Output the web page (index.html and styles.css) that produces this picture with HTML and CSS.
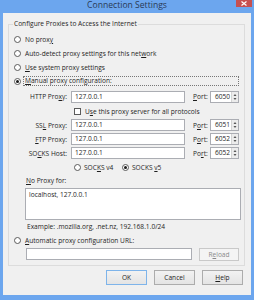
FILE: index.html
```html
<!DOCTYPE html>
<html>
<head>
<meta charset="utf-8">
<link rel="stylesheet" href="styles.css">
</head>
<body>
<div class="window">
  <div class="titlebar">
    <span class="title">Connection Settings</span>
    <span class="close"><svg width="6" height="5" viewBox="0 0 6 5"><path d="M0.5 0.5 L5.5 4.5 M5.5 0.5 L0.5 4.5" stroke="#fff" stroke-width="1.2"/></svg></span>
  </div>
  <div class="client">
    <fieldset class="group">
      <legend>Configure Proxies to Access the Internet</legend>
      <div class="rows">
        <div class="opt"><span class="radio"></span><span>No prox<u>y</u></span></div>
        <div class="opt"><span class="radio"></span><span>Auto-detect proxy settings for this net<u>w</u>ork</span></div>
        <div class="opt"><span class="radio"></span><span><u>U</u>se system proxy settings</span></div>
        <div class="opt"><span class="radio on"></span><span class="focus"><u>M</u>anual proxy configuration:</span></div>
        <div class="prow first"><span class="plabel">HTTP Pro<u>x</u>y:</span><span class="field">127.0.0.1</span><span class="portlbl"><u>P</u>ort:</span><span class="port"><span class="pval">6050</span><span class="spin"><svg width="4" height="8" viewBox="0 0 4 8"><path d="M2 1 L3.5 3 L0.5 3 Z M2 7 L3.5 5 L0.5 5 Z" fill="#555"/></svg></span></span></div>
        <div class="chkrow"><span class="check"></span><span>U<u>s</u>e this proxy server for all protocols</span></div>
        <div class="prow"><span class="plabel">SS<u>L</u> Proxy:</span><span class="field">127.0.0.1</span><span class="portlbl">P<u>o</u>rt:</span><span class="port"><span class="pval">6051</span><span class="spin"><svg width="4" height="8" viewBox="0 0 4 8"><path d="M2 1 L3.5 3 L0.5 3 Z M2 7 L3.5 5 L0.5 5 Z" fill="#555"/></svg></span></span></div>
        <div class="prow"><span class="plabel"><u>F</u>TP Proxy:</span><span class="field">127.0.0.1</span><span class="portlbl">P<u>o</u>rt:</span><span class="port"><span class="pval">6052</span><span class="spin"><svg width="4" height="8" viewBox="0 0 4 8"><path d="M2 1 L3.5 3 L0.5 3 Z M2 7 L3.5 5 L0.5 5 Z" fill="#555"/></svg></span></span></div>
        <div class="prow"><span class="plabel">SO<u>C</u>KS Host:</span><span class="field">127.0.0.1</span><span class="portlbl">Po<u>r</u>t:</span><span class="port"><span class="pval">6052</span><span class="spin"><svg width="4" height="8" viewBox="0 0 4 8"><path d="M2 1 L3.5 3 L0.5 3 Z M2 7 L3.5 5 L0.5 5 Z" fill="#555"/></svg></span></span></div>
        <div class="socks"><span class="opt2 v4"><span class="radio"></span><span>SOC<u>K</u>S v4</span></span><span class="opt2"><span class="radio on"></span><span>SOCKS <u>v</u>5</span></span></div>
        <div class="block">
          <div class="lbl"><u>N</u>o Proxy for:</div>
          <div class="textarea">localhost, 127.0.0.1</div>
          <div class="example">Example: .mozilla.org, .net.nz, 192.168.1.0/24</div>
        </div>
        <div class="opt"><span class="radio"></span><span><u>A</u>utomatic proxy configuration URL:</span></div>
        <div class="urlrow"><span class="field url"></span><span class="btn disabled">R<u>e</u>load</span></div>
      </div>
    </fieldset>
    <div class="buttons">
      <span class="btn default">OK</span>
      <span class="btn">Cancel</span>
      <span class="btn"><u>H</u>elp</span>
    </div>
  </div>
</div>
</body>
</html>
```
FILE: styles.css
```css
html, body {
  margin: 0;
  padding: 0;
}
body {
  width: 254px;
  height: 300px;
  background: #6ca6ee;
  font-family: "Open Sans", "Noto Sans", sans-serif;
  font-size: 6.6px;
  color: #1e1e1e;
}
u {
  text-decoration-thickness: 0.5px;
  text-underline-offset: 1px;
}
.window {
  height: 300px;
  box-sizing: border-box;
  background: #6ca6ee;
  display: flex;
  flex-direction: column;
  padding: 0 3px 5px 3px;
}
.titlebar {
  height: 13px;
  flex: none;
  position: relative;
  display: flex;
  justify-content: center;
  align-items: flex-start;
}
.title {
  font-size: 8.6px;
  line-height: 10px;
  color: #2a3a55;
}
.close {
  position: absolute;
  right: -1px;
  top: 0;
  width: 16px;
  height: 7px;
  background: #c75050;
  display: flex;
  align-items: center;
  justify-content: center;
}
.close svg { display: block; }
.client {
  flex: 1;
  background: #f0f0f0;
  display: flex;
  flex-direction: column;
  padding: 6px 6px 0 5px;
}
.group {
  margin: 0;
  padding: 0 0 4px 0;
  border: 1px solid #dcdcdc;
  min-width: 0;
}
.group legend {
  margin-left: 4px;
  padding: 0 1px;
  line-height: 10px;
  height: 10px;
}
.rows {
  padding-top: 3px;
  display: flex;
  flex-direction: column;
}
.opt {
  height: 14px;
  display: flex;
  align-items: center;
  padding-left: 5px;
}
.radio {
  width: 7px;
  height: 7px;
  box-sizing: border-box;
  border: 1px solid #5a5a5a;
  border-radius: 50%;
  background: #fff;
  margin-right: 4px;
  flex: none;
  display: flex;
  align-items: center;
  justify-content: center;
}
.radio.on::after {
  content: "";
  width: 3px;
  height: 3px;
  border-radius: 50%;
  background: #1a1a1a;
}
.focus {
  flex: 1;
  height: 10px;
  box-sizing: border-box;
  border: 1px dotted #777;
  padding-left: 1px;
  line-height: 8px;
  margin-left: -2px;
  margin-right: 5px;
}
.prow {
  height: 14px;
  display: flex;
  align-items: center;
}
.prow.first {
  height: 15px;
  margin-top: 1px;
}
.plabel {
  width: 58px;
  text-align: right;
  margin-right: 4px;
  flex: none;
}
.field {
  width: 114px;
  height: 12px;
  box-sizing: border-box;
  border: 1px solid #abadb3;
  background: #fff;
  padding-left: 3px;
  line-height: 10px;
  flex: none;
}
.portlbl {
  margin-left: 8px;
  width: 17px;
  flex: none;
}
.port {
  width: 29px;
  height: 12px;
  box-sizing: border-box;
  border: 1px solid #abadb3;
  background: #fff;
  display: flex;
  flex: none;
}
.pval {
  flex: 1;
  text-align: right;
  line-height: 10px;
  padding-right: 1px;
}
.spin {
  width: 6px;
  background: #ececec;
  border-left: 1px solid #d4d4d4;
  display: flex;
  align-items: center;
  justify-content: center;
}
.spin svg { display: block; }
.chkrow {
  height: 14px;
  display: flex;
  align-items: center;
  padding-left: 65px;
}
.check {
  width: 7px;
  height: 7px;
  box-sizing: border-box;
  border: 1px solid #5a5a5a;
  background: #fff;
  margin-right: 4px;
  flex: none;
}
.socks {
  height: 14px;
  display: flex;
  align-items: center;
  padding-left: 65px;
}
.opt2 {
  display: flex;
  align-items: center;
}
.opt2.v4 {
  width: 48px;
}
.opt2 .radio {
  margin-right: 3px;
}
.block {
  margin-left: 16px;
  margin-right: 3px;
  display: flex;
  flex-direction: column;
}
.lbl {
  height: 14px;
  line-height: 14px;
  padding-left: 1px;
}
.textarea {
  height: 32px;
  box-sizing: border-box;
  border: 1px solid #abadb3;
  background: #fff;
  padding: 1px 3px;
  line-height: 10px;
}
.example {
  height: 13px;
  line-height: 13px;
  padding-left: 2px;
}
.urlrow {
  height: 14px;
  display: flex;
  align-items: center;
  padding-left: 17px;
}
.url {
  width: 166px;
}
.btn {
  width: 41px;
  height: 15px;
  box-sizing: border-box;
  border: 1px solid #acacac;
  background: linear-gradient(#f2f2f2, #e4e4e4);
  display: flex;
  align-items: center;
  justify-content: center;
  flex: none;
}
.btn.default {
  border-color: #7eb4ea;
}
.btn.disabled {
  width: 40px;
  height: 13px;
  margin-left: 7px;
  color: #8a8a8a;
  border-color: #c9c9c9;
  background: #f4f4f4;
}
.buttons {
  display: flex;
  justify-content: flex-end;
  gap: 7px;
  margin-top: 4px;
  margin-right: 2px;
}
```
